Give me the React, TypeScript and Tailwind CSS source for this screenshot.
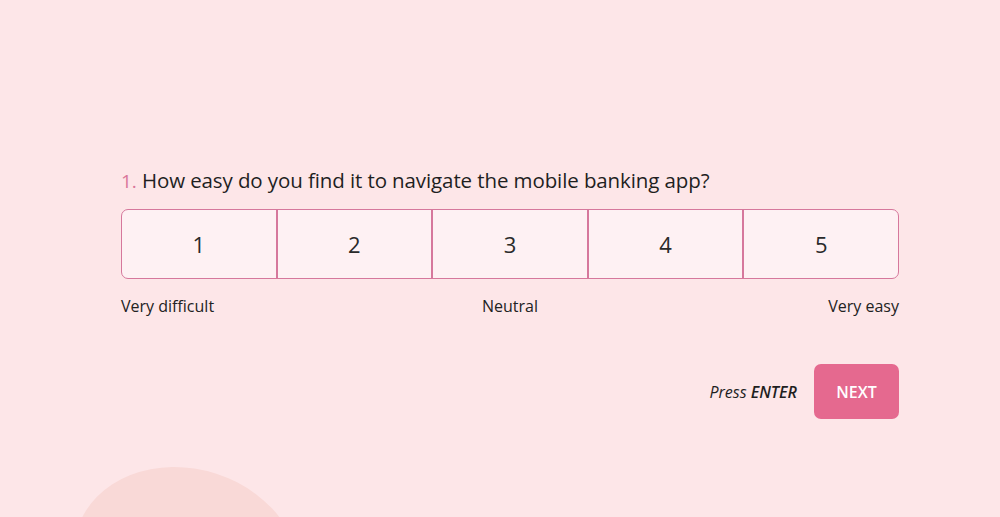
import React from "react";

const labels = ["Very difficult", "Neutral", "Very easy"];

export default function App() {
  return (
    <div
      className="relative w-[1000px] h-[517px] overflow-hidden bg-[#fde6e8] text-[#1f1f1f]"
      style={{ fontFamily: '"Open Sans", "Noto Sans", sans-serif' }}
    >
      <div className="absolute left-[72px] top-[469px] w-[230px] h-[190px] rounded-[50%] bg-[#f9d9d7] rotate-[18deg]" />

      <div className="relative w-[778px] ml-[121px] pt-[166px]">
        <h1 className="text-[20.5px] leading-[28px] tracking-[-0.1px]">
          <span className="text-[#d9769a] text-[19px]">1.</span> How easy do you find it to navigate the mobile banking app?
        </h1>

        <div className="mt-[14px] flex h-[70px] rounded-[7px] border border-[#d6789c] bg-[#fef1f3] overflow-hidden">
          {[1, 2, 3, 4, 5].map((n) => (
            <button
              key={n}
              className="flex-1 flex items-center justify-center text-[22px] text-[#2a2a2a] border-l-2 border-[#d6789c] first:border-l-0"
            >
              {n}
            </button>
          ))}
        </div>

        <div className="mt-[16px] grid grid-cols-3 text-[16px] leading-[22px] text-[#222]">
          <span>{labels[0]}</span>
          <span className="text-center">{labels[1]}</span>
          <span className="text-right">{labels[2]}</span>
        </div>

        <div className="mt-[47px] flex items-center justify-end gap-[17px]">
          <span className="italic text-[16px] text-[#1f1f1f]">
            Press <b className="font-semibold">ENTER</b>
          </span>
          <button className="w-[85px] h-[55px] rounded-[7px] bg-[#e5698f] text-white font-semibold text-[16px]">
            NEXT
          </button>
        </div>
      </div>
    </div>
  );
}
